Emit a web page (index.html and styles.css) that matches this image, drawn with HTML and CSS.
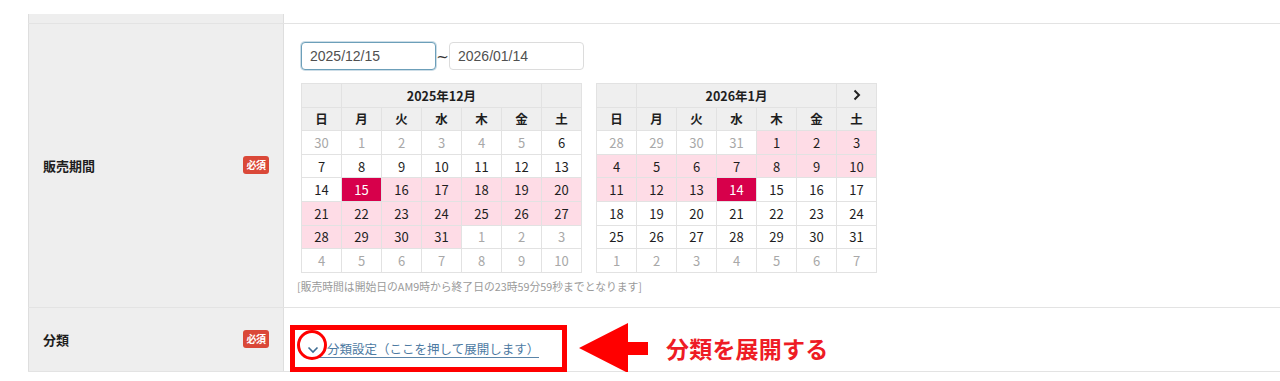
FILE: index.html
```html
<!DOCTYPE html>
<html lang="ja">
<head>
<meta charset="utf-8">
<link rel="stylesheet" href="styles.css">
</head>
<body>
<div class="form-table">
  <div class="row row-prev">
    <div class="label"></div>
    <div class="field"></div>
  </div>

  <div class="row row-period">
    <div class="label">
      <span class="label-text">販売期間</span>
      <span class="badge">必須</span>
    </div>
    <div class="field field-period">
      <div class="date-range">
        <input class="date-input is-focus" type="text" value="2025/12/15">
        <span class="tilde">~</span>
        <input class="date-input" type="text" value="2026/01/14">
      </div>
      <div class="calendars">
        <div class="cal">
          <div class="c head"></div>
          <div class="c head title">2025年12月</div>
          <div class="c head"></div>
          <div class="c head">日</div><div class="c head">月</div><div class="c head">火</div><div class="c head">水</div><div class="c head">木</div><div class="c head">金</div><div class="c head">土</div>
          <div class="c off">30</div><div class="c off">1</div><div class="c off">2</div><div class="c off">3</div><div class="c off">4</div><div class="c off">5</div><div class="c">6</div>
          <div class="c">7</div><div class="c">8</div><div class="c">9</div><div class="c">10</div><div class="c">11</div><div class="c">12</div><div class="c">13</div>
          <div class="c">14</div><div class="c sel">15</div><div class="c rng">16</div><div class="c rng">17</div><div class="c rng">18</div><div class="c rng">19</div><div class="c rng">20</div>
          <div class="c rng">21</div><div class="c rng">22</div><div class="c rng">23</div><div class="c rng">24</div><div class="c rng">25</div><div class="c rng">26</div><div class="c rng">27</div>
          <div class="c rng">28</div><div class="c rng">29</div><div class="c rng">30</div><div class="c rng">31</div><div class="c off">1</div><div class="c off">2</div><div class="c off">3</div>
          <div class="c off">4</div><div class="c off">5</div><div class="c off">6</div><div class="c off">7</div><div class="c off">8</div><div class="c off">9</div><div class="c off">10</div>
        </div>
        <div class="cal">
          <div class="c head"></div>
          <div class="c head title">2026年1月</div>
          <div class="c head nav"><svg width="10" height="12" viewBox="0 0 10 12"><polyline points="2.5,1.5 7,6 2.5,10.5" fill="none" stroke="#222" stroke-width="2"/></svg></div>
          <div class="c head">日</div><div class="c head">月</div><div class="c head">火</div><div class="c head">水</div><div class="c head">木</div><div class="c head">金</div><div class="c head">土</div>
          <div class="c off">28</div><div class="c off">29</div><div class="c off">30</div><div class="c off">31</div><div class="c rng">1</div><div class="c rng">2</div><div class="c rng">3</div>
          <div class="c rng">4</div><div class="c rng">5</div><div class="c rng">6</div><div class="c rng">7</div><div class="c rng">8</div><div class="c rng">9</div><div class="c rng">10</div>
          <div class="c rng">11</div><div class="c rng">12</div><div class="c rng">13</div><div class="c sel">14</div><div class="c">15</div><div class="c">16</div><div class="c">17</div>
          <div class="c">18</div><div class="c">19</div><div class="c">20</div><div class="c">21</div><div class="c">22</div><div class="c">23</div><div class="c">24</div>
          <div class="c">25</div><div class="c">26</div><div class="c">27</div><div class="c">28</div><div class="c">29</div><div class="c">30</div><div class="c">31</div>
          <div class="c off">1</div><div class="c off">2</div><div class="c off">3</div><div class="c off">4</div><div class="c off">5</div><div class="c off">6</div><div class="c off">7</div>
        </div>
      </div>
      <p class="note">[販売時間は開始日のAM9時から終了日の23時59分59秒までとなります]</p>
    </div>
  </div>

  <div class="row row-cat">
    <div class="label">
      <span class="label-text">分類</span>
      <span class="badge">必須</span>
    </div>
    <div class="field field-cat">
      <span class="toggle">
        <svg class="toggle-icon" width="12" height="8" viewBox="0 0 12 8"><polyline points="1.5,1.5 6,6 10.5,1.5" fill="none" stroke="#3f6d93" stroke-width="1.6"/></svg>
        <span class="toggle-text">分類設定（ここを押して展開します）</span>
      </span>
      <span class="mark-box"></span>
      <span class="mark-circle"></span>
      <svg class="mark-arrow" width="74" height="56" viewBox="0 0 74 56"><polygon points="3,28 52,3 52,22 72,22 72,35 52,35 52,53" fill="#ff0000"/></svg>
      <span class="mark-text">分類を展開する</span>
    </div>
  </div>
</div>
</body>
</html>
```

FILE: styles.css
```css
html, body {
  margin: 0;
  padding: 0;
  background: #fff;
}

body {
  font-family: "Noto Sans CJK JP", "Noto Sans", sans-serif;
  color: #222;
}

.form-table {
  margin: 14px 0 0 28px;
}

.row {
  display: grid;
  grid-template-columns: 256px 1fr;
  border-bottom: 1px solid #e3e3e3;
}

.label {
  background: #eeeeee;
  border-left: 1px solid #dedede;
  border-right: 1px solid #dedede;
  display: flex;
  align-items: center;
  justify-content: space-between;
  padding: 0 14px 0 14px;
}

.label-text {
  font-size: 13px;
  font-weight: 700;
  color: #1e1e1e;
}

.badge {
  background: #da4838;
  color: #fff;
  font-size: 10px;
  font-weight: 700;
  line-height: 18px;
  height: 18px;
  width: 26px;
  text-align: center;
  border-radius: 3px;
  letter-spacing: -0.5px;
}

.row-prev {
  height: 9px;
}

.field-period {
  padding: 18px 18px 13px 17px;
}

.date-range {
  display: flex;
  align-items: center;
  height: 28px;
}

.date-input {
  box-sizing: border-box;
  width: 135px;
  height: 28px;
  margin: 0;
  border: 1px solid #dcdcdc;
  border-radius: 4px;
  padding: 0 8px;
  font-family: "Liberation Sans", Arial, sans-serif;
  font-size: 14px;
  color: #505050;
  background: #fff;
  outline: none;
}

.date-input.is-focus {
  border-color: #6c9fb9;
  box-shadow: 0 0 0 1px rgba(108, 159, 185, 0.35);
}

.tilde {
  width: 13px;
  text-align: center;
  font-family: "DejaVu Sans", sans-serif;
  font-size: 15px;
  color: #333;
  line-height: 28px;
  padding-top: 2px;
}

.calendars {
  display: flex;
  gap: 14px;
  margin-top: 13px;
}

.cal {
  display: grid;
  grid-template-columns: repeat(7, 40px);
  grid-auto-rows: 23.6px;
  border-top: 1px solid #e2e2e2;
  border-left: 1px solid #e2e2e2;
}

.c {
  box-sizing: border-box;
  border-right: 1px solid #e2e2e2;
  border-bottom: 1px solid #e2e2e2;
  display: flex;
  align-items: center;
  justify-content: center;
  font-size: 13px;
  color: #1e1e1e;
  background: #fff;
}

.c.head {
  background: #efefef;
  font-weight: 700;
  font-size: 12.5px;
}

.c.title {
  grid-column: span 5;
}

.c.off {
  color: #a8a8a8;
}

.c.rng {
  background: #fedce6;
}

.c.sel {
  background: #d7004b;
  color: #fff;
}

.note {
  margin: 5px 0 0 -4px;
  font-size: 10.8px;
  line-height: 16px;
  color: #9a9a9a;
}

.row-cat {
  height: 63px;
}

.field-cat {
  position: relative;
  padding: 27px 0 0 23px;
}

.toggle {
  display: inline-flex;
  align-items: center;
  color: #4d7aa2;
}

.toggle-icon {
  display: block;
  margin-top: 2px;
}

.toggle-text {
  font-size: 12.5px;
  line-height: 17px;
  padding-left: 8px;
  border-bottom: 1px solid #5a84a8;
}

.mark-box {
  position: absolute;
  left: 6px;
  top: 17px;
  width: 277px;
  height: 47px;
  box-sizing: border-box;
  border: 5px solid #ff0000;
}

.mark-circle {
  position: absolute;
  left: 13px;
  top: 22px;
  width: 30px;
  height: 30px;
  box-sizing: border-box;
  border: 3.5px solid #ff0000;
  border-radius: 50%;
}

.mark-arrow {
  position: absolute;
  left: 292px;
  top: 12px;
}

.mark-text {
  position: absolute;
  left: 382px;
  top: 24px;
  font-size: 23px;
  line-height: 32px;
  font-weight: 700;
  color: #ee1c25;
  letter-spacing: 0.2px;
}
```
